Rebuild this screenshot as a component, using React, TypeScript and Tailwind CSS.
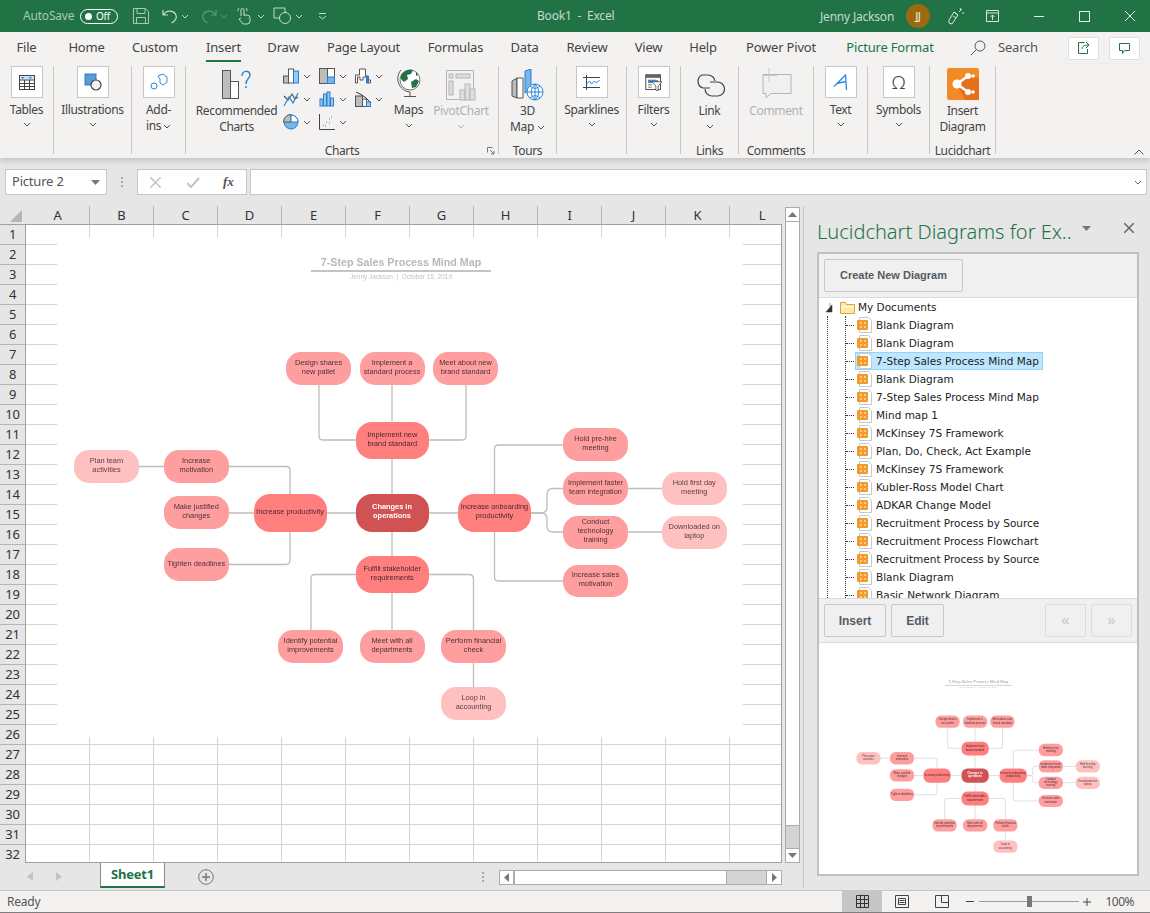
import React from "react";

const Chev = ({ c = "#555", className = "" }: { c?: string; className?: string }) => (
  <svg width="8" height="5" viewBox="0 0 8 5" className={className}><path d="M1 1l3 3 3-3" fill="none" stroke={c} strokeWidth="1" /></svg>
);
const Caret = ({ c = "#777", className = "" }: { c?: string; className?: string }) => (
  <svg width="9" height="5" viewBox="0 0 9 5" className={className}><path d="M0 0h9L4.5 5z" fill={c} /></svg>
);

type N = { x: number; y: number; w: number; h: number; t: string; k: 0 | 1 | 2 | 3 };
const nodes: N[] = [
  { x: 286, y: 352, w: 65, h: 33, t: "Design shares\nnew pallet", k: 2 },
  { x: 359.5, y: 352, w: 65, h: 33, t: "Implement a\nstandard process", k: 2 },
  { x: 433, y: 352, w: 65, h: 33, t: "Meet about new\nbrand standard", k: 2 },
  { x: 355.5, y: 421.5, w: 73.5, h: 37, t: "Implement new\nbrand standard", k: 1 },
  { x: 563, y: 428, w: 65, h: 33, t: "Hold pre-hire\nmeeting", k: 2 },
  { x: 74, y: 450, w: 65, h: 33, t: "Plan team\nactivities", k: 3 },
  { x: 163.5, y: 450, w: 65.5, h: 33, t: "Increase\nmotivation", k: 2 },
  { x: 163.5, y: 496, w: 65.5, h: 33, t: "Make justified\nchanges", k: 2 },
  { x: 253.5, y: 493.5, w: 73, h: 38.5, t: "Increase productivity", k: 1 },
  { x: 355.5, y: 493.5, w: 73, h: 38.5, t: "Changes in\noperations", k: 0 },
  { x: 458, y: 493.5, w: 73, h: 38.5, t: "Increase onboarding\nproductivity", k: 1 },
  { x: 563, y: 472, w: 65, h: 33, t: "Implement faster\nteam integration", k: 2 },
  { x: 661.5, y: 472, w: 65.5, h: 33, t: "Hold first day\nmeeting", k: 3 },
  { x: 563, y: 516, w: 65, h: 32.5, t: "Conduct\ntechnology\ntraining", k: 2 },
  { x: 661.5, y: 516, w: 65.5, h: 32.5, t: "Downloaded on\nlaptop", k: 3 },
  { x: 163.5, y: 548, w: 65.5, h: 33, t: "Tighten deadlines", k: 2 },
  { x: 355.5, y: 556, w: 73.5, h: 37, t: "Fulfill stakeholder\nrequirements", k: 1 },
  { x: 563, y: 564.5, w: 65, h: 32.5, t: "Increase sales\nmotivation", k: 2 },
  { x: 278, y: 630, w: 65, h: 33, t: "Identify potential\nimprovements", k: 2 },
  { x: 359.5, y: 630, w: 65, h: 33, t: "Meet with all\ndepartments", k: 2 },
  { x: 441, y: 630, w: 65, h: 33, t: "Perform financial\ncheck", k: 2 },
  { x: 441, y: 687, w: 65, h: 33, t: "Loop in\naccounting", k: 3 },
];

const kindClass = [
  "bg-[#d15252] text-white font-bold rounded-[16px]",
  "bg-[#ff7f7f] text-[#4a2830] rounded-[16px]",
  "bg-[#ff9e9e] text-[#4d3038] rounded-[15px]",
  "bg-[#ffc0c0] text-[#5a3d45] rounded-[15px]",
];

const links = [
  "M392 385V421M392 458V494M392 532V556M392 593V630",
  "M319 385V436Q319 440 323 440H356",
  "M466 385V436Q466 440 462 440H429",
  "M139 466.5H164M229 513H254M326 513H356M429 513H458",
  "M229 466.5H286Q290 466.5 290 470.5V494",
  "M290 532V560Q290 564.5 286 564.5H229",
  "M494.5 494V449Q494.5 445 498.5 445H563",
  "M494.5 532V577Q494.5 581 498.5 581H563",
  "M531 513H541Q547 513 547 507V494.5Q547 488.5 553 488.5H563",
  "M531 513H541Q547 513 547 519V526Q547 532 553 532H563",
  "M628 488.5H662M628 532H662",
  "M356 574.5H315Q311 574.5 311 578.5V630",
  "M429 574.5H469Q473.5 574.5 473.5 579V630",
  "M473.5 663V687",
];

function Picture() {
  return (
    <div className="relative w-[686px] h-[499px] bg-white blur-[0.3px] font-['Liberation_Sans',sans-serif] tracking-[0px]">
      <svg width="686" height="499" viewBox="57 238 686 499" className="absolute left-0 top-0">
        {links.map((d) => (
          <path key={d} d={d} fill="none" stroke="#bdbdbd" strokeWidth="1.3" />
        ))}
      </svg>
      <div className="absolute left-[254px] top-[18px] w-[180px] flex flex-col items-center">
        <div className="text-[10.7px] leading-[13px] font-bold text-[#b8b8b8] whitespace-nowrap pb-[1px]">7-Step Sales Process Mind Map</div>
        <div className="w-full h-[2px] bg-[#c4c4c4]" />
        <div className="text-[6.5px] leading-[10px] text-[#c4c4c4] whitespace-nowrap">Jenny Jackson &nbsp;|&nbsp; October 15, 2019</div>
      </div>
      {nodes.map((n) => (
        <div
          key={n.t}
          className={"absolute flex items-center justify-center text-center text-[7.4px] leading-[9px] pb-[3px] whitespace-pre " + kindClass[n.k]}
          style={{ left: n.x - 57, top: n.y - 238, width: n.w, height: n.h }}
        >
          {n.t}
        </div>
      ))}
    </div>
  );
}

const BoxIcons: Record<string, React.ReactNode> = {
  Tables: (
    <svg width="18" height="18" viewBox="0 0 18 18">
      <rect x="1.5" y="2.5" width="15" height="14" fill="#fff" stroke="#444" />
      <rect x="2" y="3" width="14" height="3.5" fill="#cfe4f7" />
      <path d="M3 4h3.5l-1.7 2zM10.5 4H14l-1.7 2z" fill="#2b88d8" />
      <path d="M1.5 7h15M1.5 10.5h15M1.5 13.5h15M6.5 7v9.500M11.500 7v9.500" stroke="#444" fill="none" />
    </svg>
  ),
  Illustrations: (
    <svg width="20" height="20" viewBox="0 0 20 20">
      <rect x="2" y="2" width="11" height="11" fill="#5b9bd5" stroke="#2b7cd3" />
      <circle cx="13" cy="13" r="5" fill="#f3f3f3" stroke="#444" strokeWidth="1.2" />
    </svg>
  ),
  Sparklines: (
    <svg width="17" height="15" viewBox="0 0 17 15" fill="none">
      <path d="M0 2.500h17M0 12.500h17M3.500 0v15" stroke="#444" />
      <path d="M3.500 9l3-3 2 3 3-3 2 2 3-3" stroke="#2b7cd3" />
    </svg>
  ),
  Filters: (
    <svg width="17" height="17" viewBox="0 0 22 22" fill="none">
      <rect x="1" y="1" width="19" height="19" stroke="#444" strokeWidth="1.200" />
      <rect x="1" y="1" width="19" height="4" fill="#666" />
      <path d="M4 8h10M4 11h5M4 14h5M4 17h5" stroke="#555" />
      <rect x="4" y="8" width="13" height="3" fill="#2b88d8" />
      <path d="M9 10h13l-5 5.500V22l-3-1v-5.500z" fill="#fff" stroke="#444" />
    </svg>
  ),
  Text: (
    <svg width="15" height="17" viewBox="0 0 15 17" fill="none">
      <path d="M1 12.500L12.500 1 13.500 16M3.500 9.500l9.500-2" stroke="#2b88d8" strokeWidth="1.300" />
    </svg>
  ),
  Symbols: <span className="text-[19px] leading-none text-[#444] font-light">Ω</span>,
};

function Group({ w, label, children }: { w: string; label?: string; children: React.ReactNode }) {
  return (
    <div className={"flex flex-col items-center h-[88px] border-r border-[#c6c6c6] shrink-0 " + w}>
      <div className="flex-1 w-full flex flex-col items-center">{children}</div>
      {label && <div className="text-[12px] leading-[16px] -mb-[5px] text-[#444] whitespace-nowrap">{label}</div>}
    </div>
  );
}

function BoxBtn({ label, icon }: { label: string; icon: string | React.ReactNode }) {
  return (
    <>
      <div className="w-[32px] h-[32px] bg-white border border-[#c6c6c6] flex items-center justify-center">
        {typeof icon === "string" ? BoxIcons[icon] : icon}
      </div>
      <div className="text-[12px] leading-[18px] mt-[3px] text-[#444] whitespace-nowrap">{label}</div>
      <Chev className="mt-[3px]" />
    </>
  );
}

function ChartCell({ children }: { children: React.ReactNode }) {
  return (
    <div className="flex items-center w-[36px] h-[16px]">
      <svg width="16" height="16" viewBox="0 0 16 16" fill="none">{children}</svg>
      <Chev className="ml-[4px]" />
    </div>
  );
}

const Tab = ({ w, t, c = "text-[#444]", active = false }: { w: string; t: string; c?: string; active?: boolean }) => (
  <div className={"h-8 flex items-center justify-center shrink-0 " + w}>
    <span className={"relative whitespace-nowrap " + c}>
      {t}
      {active && <span className="absolute left-0 right-0 -bottom-[4px] h-[2px] bg-[#217346]" />}
    </span>
  </div>
);

const cols = ["A", "B", "C", "D", "E", "F", "G", "H", "I", "J", "K", "L"];
const rows = Array.from({ length: 32 }, (_, i) => i + 1);
const tree = [
  "Blank Diagram", "Blank Diagram", "7-Step Sales Process Mind Map", "Blank Diagram", "7-Step Sales Process Mind Map",
  "Mind map 1", "McKinsey 7S Framework", "Plan, Do, Check, Act Example", "McKinsey 7S Framework", "Kubler-Ross Model Chart",
  "ADKAR Change Model", "Recruitment Process by Source", "Recruitment Process Flowchart", "Recruitment Process by Source",
  "Blank Diagram", "Basic Network Diagram",
];

const FileIcon = () => (
  <span className="relative z-10 block w-[17px] h-[16px] shrink-0">
    <svg width="17" height="16" viewBox="0 0 17 16" className="absolute left-0 top-0">
      <path d="M2.500.5h9l3 3v12h-12z" fill="#fff" stroke="#c8c8c8" />
      <rect x="0" y="3" width="11" height="10" rx="1" fill="#f39a2b" />
      <path d="M3 6h2M7 6h2M3 10h2M7 10h2" stroke="#fff" strokeWidth="1.200" />
    </svg>
  </span>
);

const PanelBtn = ({ w, t, dim = false, small = false }: { w: string; t: string; dim?: boolean; small?: boolean }) => (
  <div className={"h-[33px] border rounded-[2px] bg-[#f0f0f0] flex items-center justify-center font-['Liberation_Sans',sans-serif] tracking-[0px] " + w + (dim ? " border-[#dcdcdc] text-[#cfcfcf] text-[15px] font-bold" : " border-[#c8c8c8] text-[#555b62] font-bold") + (small ? " text-[11px]" : " text-[12px]")}>
    {t}
  </div>
);

export default function App() {
  return (
    <div className="w-[1150px] h-[913px] overflow-hidden flex flex-col bg-[#e6e6e6] text-[13px] text-[#444] font-['Noto_Sans',sans-serif] tracking-[-0.2px]">
      {/* Title bar */}
      <div className="h-8 bg-[#217346] flex items-center shrink-0 text-[12px] relative">
        <span className="ml-[23px] w-[57px] text-[#a9c9b7]">AutoSave</span>
        <div className="w-[38px] h-[15px] rounded-full border border-white flex items-center pl-[4px]">
          <span className="w-[7px] h-[7px] rounded-full bg-white" />
          <span className="ml-[4px] text-[10px] leading-none text-white">Off</span>
        </div>
        <svg width="18" height="18" viewBox="0 0 18 18" fill="none" stroke="#a9c9b7" className="ml-[14px]"><path d="M1.500 1.500h12l3 3v12h-15zM5 1.500v5h8v-5M4.500 16.500v-6h9v6" /></svg>
        <svg width="16" height="16" viewBox="0 0 16 16" fill="none" stroke="#c4dbce" strokeWidth="1.200" className="ml-[12px]"><path d="M1 2v5h5M1.500 7C4 2 11 2 13.500 6c2 3.500 0 7-4 9" /></svg>
        <Chev c="#c4dbce" className="ml-[3px]" />
        <svg width="16" height="16" viewBox="0 0 16 16" fill="none" stroke="#5f9a7b" strokeWidth="1.200" className="ml-[12px]"><path d="M15 2v5h-5M14.500 7C12 2 5 2 2.500 6c-2 3.500 0 7 4 9" /></svg>
        <Chev c="#5f9a7b" className="ml-[3px]" />
        <svg width="15" height="18" viewBox="0 0 15 18" fill="none" stroke="#c4dbce" className="ml-[9px]"><path d="M4 9V3a1.500 1.500 0 013 0v6M7 8h3a3 3 0 013 3v3a3 3 0 01-3 3H6l-4-5 2-1M1 4a3 3 0 011-3M10 4a3 3 0 00-1-3" /></svg>
        <Chev c="#c4dbce" className="ml-[5px]" />
        <svg width="19" height="18" viewBox="0 0 19 18" fill="none" stroke="#c4dbce" className="ml-[8px]"><path d="M6 11H1V1h11v5" /><circle cx="12" cy="11" r="5.500" /></svg>
        <Chev c="#c4dbce" className="ml-[3px]" />
        <svg width="9" height="7" viewBox="0 0 9 7" fill="none" stroke="#c4dbce" className="ml-[15px]"><path d="M1 .5h7M1 3l3.500 3L8 3" /></svg>
        <span className="absolute left-[537px] top-[7px] text-[#c4dbce] text-[12px]">Book1&nbsp; -&nbsp; Excel</span>
        <span className="absolute left-[820px] top-[8px] text-[#c4dbce] text-[12px]">Jenny Jackson</span>
        <div className="ml-auto flex items-center">
          <span className="w-[24px] h-[24px] rounded-full bg-[#9a6a0c] text-white text-[10px] flex items-center justify-center">JJ</span>
          <svg width="16" height="18" viewBox="0 0 16 18" fill="none" stroke="#d6e6dc" className="ml-[18px]"><path d="M1 16l3 1 6-9-4-3-5 8zM6 5l4 3M11 5l3-3M12 1l1 2M14 6h2M5 9l3 2" /></svg>
          <svg width="13" height="12" viewBox="0 0 13 12" fill="none" stroke="#d6e6dc" className="ml-[22px]"><path d="M.5 .5h12v11H.5zM.5 3h12M6.500 10V5M4.500 7l2-2 2 2" /></svg>
          <span className="w-[10px] h-[1px] bg-[#e6efe9] ml-[35px]" />
          <span className="w-[11px] h-[11px] border border-[#e6efe9] ml-[35px]" />
          <svg width="10" height="10" viewBox="0 0 10 10" stroke="#e6efe9" className="ml-[35px] mr-[15px]"><path d="M0 0l10 10M10 0L0 10" /></svg>
        </div>
      </div>

      {/* Tabs */}
      <div className="h-8 bg-[#f3f2f1] flex items-center shrink-0">
        <Tab w="w-[53px]" t="File" />
        <Tab w="w-[67px]" t="Home" />
        <Tab w="w-[70px]" t="Custom" />
        <Tab w="w-[67px]" t="Insert" active />
        <Tab w="w-[52px]" t="Draw" />
        <Tab w="w-[109px]" t="Page Layout" />
        <Tab w="w-[75px]" t="Formulas" />
        <Tab w="w-[63px]" t="Data" />
        <Tab w="w-[62px]" t="Review" />
        <Tab w="w-[61px]" t="View" />
        <Tab w="w-[48px]" t="Help" />
        <Tab w="w-[108px]" t="Power Pivot" />
        <Tab w="w-[110px]" t="Picture Format" c="text-[#217346]" />
        <svg width="16" height="16" viewBox="0 0 16 16" fill="none" stroke="#555" className="ml-[25px]"><circle cx="10" cy="6" r="5" /><path d="M6.500 9.500L1 15" /></svg>
        <span className="ml-[12px] text-[#555]">Search</span>
        <div className="ml-auto flex gap-[10px] mr-[10px]">
          <div className="w-[31px] h-[23px] bg-white border border-[#e1dfdd] rounded-[2px] flex items-center justify-center">
            <svg width="14" height="14" viewBox="0 0 14 14" fill="none" stroke="#217346"><path d="M7.500 1.500h-6v11h9V8M5 8c0-3 3-4 6-4M9 1l3 3-3 3" /></svg>
          </div>
          <div className="w-[31px] h-[23px] bg-white border border-[#e1dfdd] rounded-[2px] flex items-center justify-center">
            <svg width="13" height="13" viewBox="0 0 13 13" fill="none" stroke="#217346"><path d="M1.500 1.500h10v7h-5l-2 3v-3h-3z" /></svg>
          </div>
        </div>
      </div>

      {/* Ribbon */}
      <div className="h-[94px] bg-[#f3f2f1] flex pt-[2px] shrink-0 relative z-10 shadow-[0_3px_5px_rgba(0,0,0,0.14)] text-[12px] tracking-[-0.35px]">
        <Group w="w-[54px]"><BoxBtn label="Tables" icon="Tables" /></Group>
        <Group w="w-[78px]"><BoxBtn label="Illustrations" icon="Illustrations" /></Group>
        <Group w="w-[54px]">
          <div className="w-[32px] h-[32px] bg-white border border-[#c6c6c6] flex items-center justify-center">
            <svg width="18" height="18" viewBox="0 0 18 18" fill="none" stroke="#2b88d8"><path d="M8 3l5-2 4 3v5l-4 3-3-2V6z" /><circle cx="4" cy="13" r="3" /></svg>
          </div>
          <div className="text-[12px] leading-[16px] mt-[4px] text-center text-[#444]">Add-<br /><span className="inline-flex items-center gap-[2px]">ins<Chev /></span></div>
        </Group>

        {/* Charts */}
        <Group w="w-[313px]" label="Charts">
          <div className="flex w-full relative">
            <div className="w-[96px] shrink-0 flex flex-col items-center pl-[5px]">
              <svg width="30" height="30" viewBox="0 0 30 30" fill="none" className="mt-[4px] ml-[1px] mb-[3px]">
                <rect x=".5" y=".5" width="8" height="28" fill="#bdbdbd" stroke="#555" />
                <rect x="8.500" y="11.500" width="8" height="17" fill="#fff" stroke="#555" />
                <path d="M20 6c0-6 8-6 8-1 0 4-4 3-4 9M24 16v2" stroke="#2b88d8" strokeWidth="1.500" />
              </svg>
              <div className="text-center leading-[16px] text-[#444] whitespace-nowrap">Recommended<br />Charts</div>
            </div>
            <div className="grid grid-cols-[36px_36px_36px] auto-rows-[16px] gap-y-[7px] pt-[2px] h-[68px] shrink-0 ml-[1px]">
              <ChartCell><rect x=".5" y="8" width="5" height="7" fill="#bdbdbd" stroke="#555" /><rect x="5.500" y="1" width="5" height="14" fill="#fff" stroke="#555" /><rect x="10.500" y="3" width="5" height="12" fill="#9cc8ee" stroke="#2b7cd3" /></ChartCell>
              <ChartCell><rect x=".5" y=".5" width="15" height="15" fill="#fff" stroke="#555" /><rect x=".5" y=".5" width="8" height="15" fill="#bdbdbd" stroke="#555" /><rect x="8.500" y="9" width="7" height="6.500" fill="#7ab5e8" stroke="#2b7cd3" /></ChartCell>
              <ChartCell><path d="M.5 15V7h4V1h6v7h3v4h2v3h-4V9H8v3H5V9H2.500v6z" fill="#fff" stroke="#555" /><rect x="11" y="8" width="3" height="7" fill="#2b7cd3" /></ChartCell>
              <ChartCell><path d="M1 5l4 4 4-6 3 5 3-2" stroke="#555" strokeWidth="1.200" /><path d="M1 15L6 6l4 6 5-10" stroke="#2b88d8" strokeWidth="1.200" /></ChartCell>
              <ChartCell><rect x="1" y="8" width="3" height="7" fill="#9cc8ee" stroke="#2b7cd3" /><rect x="4.500" y="3" width="3" height="12" fill="#9cc8ee" stroke="#2b7cd3" /><rect x="8" y="1" width="3" height="14" fill="#9cc8ee" stroke="#2b7cd3" /><rect x="11.500" y="7" width="3" height="8" fill="#9cc8ee" stroke="#2b7cd3" /></ChartCell>
              <ChartCell><rect x=".5" y="5" width="7" height="10.500" fill="#bdbdbd" stroke="#555" /><rect x="7.500" y="8" width="4" height="7.500" fill="#fff" stroke="#555" /><rect x="11.500" y="11" width="4" height="4.500" fill="#9cc8ee" stroke="#2b7cd3" /><path d="M1 1l6 3 4 3 4 4" stroke="#333" /></ChartCell>
              <ChartCell><circle cx="8" cy="8" r="7" fill="#7ab5e8" stroke="#2b7cd3" /><path d="M8 8V0.500A7.500 7.500 0 00.5 8z" fill="#bdbdbd" stroke="#555" /><path d="M8 8h7A7 7 0 008 1z" fill="#fff" stroke="#2b7cd3" /></ChartCell>
              <ChartCell><path d="M.5 0v15.500H16" stroke="#444" /><path d="M4 11h1M7 8h1M10 5h1M6 12h1M10 9h1M12 3h1" stroke="#2b88d8" /></ChartCell>
            </div>
            <div className="w-[33px] shrink-0 flex flex-col items-center ml-[1px]">
              <svg width="26" height="32" viewBox="0 0 26 32" fill="none" className="mt-[1px] mb-[3px]">
                <circle cx="14" cy="13" r="10" fill="#fff" stroke="#777" />
                <path d="M5 8c3-5 9-6 12-5l-2 4-4 1 1 4-4 3-3-3zM15 15l5-3 3 2-3 6-4 1zM20 5l2 3-2 1z" fill="#217346" />
                <path d="M5 3C-2 11 3 24 14 25M14 25v4M8 29.500h12" stroke="#555" />
              </svg>
              <div className="leading-[16px] text-[#444]">Maps</div>
              <Chev className="mt-[5px]" />
            </div>
            <div className="w-[56px] shrink-0 flex flex-col items-center ml-[8px]">
              <svg width="30" height="31" viewBox="0 0 30 31" fill="none" stroke="#b5b5b5" className="mt-[4px] mb-[2px]">
                <path d="M.5 .5h27v20h-6M.5 .5v29h13" />
                <rect x="3" y="4" width="4" height="4" fill="#ddd" />
                <rect x="10" y="4" width="14" height="4" fill="#ddd" />
                <rect x="3" y="11" width="4" height="14" fill="#ddd" />
                <rect x="14" y="20" width="5" height="10" fill="#ddd" />
                <rect x="19" y="14" width="5" height="16" fill="#ddd" />
                <rect x="24" y="19" width="5" height="11" fill="#ddd" />
              </svg>
              <div className="leading-[16px] text-[#b1b1b1]">PivotChart</div>
              <Chev c="#b1b1b1" className="mt-[5px]" />
            </div>
            <svg width="8" height="8" viewBox="0 0 8 8" fill="none" stroke="#777" className="absolute left-[301px] top-[81px]"><path d="M.5 .5h5M.5 .5v5M3 3l4 4M7 4v3H4" /></svg>
          </div>
        </Group>

        <Group w="w-[58px]" label="Tours">
          <svg width="34" height="32" viewBox="0 0 34 32" fill="none" className="mt-[3px] mb-[2px]">
            <path d="M1 12l5-3v20l-5-2z" fill="#bdbdbd" stroke="#555" />
            <path d="M6 9h6v20H6z" fill="#fff" stroke="#555" />
            <path d="M14 2l6-2v20l-6 4z" fill="#7ab5e8" stroke="#2b7cd3" />
            <circle cx="24" cy="23" r="8" fill="#fff" stroke="#2b88d8" />
            <path d="M16 23h16M24 15v16M19 17c3 3 7 3 10 0M19 29c3-3 7-3 10 0M24 15c-5 5-5 11 0 16M24 15c5 5 5 11 0 16" stroke="#2b88d8" />
          </svg>
          <div className="leading-[16px] text-center text-[#444]">3D<br /><span className="inline-flex items-center gap-[3px]">Map<Chev /></span></div>
        </Group>
        <Group w="w-[70px]"><BoxBtn label="Sparklines" icon="Sparklines" /></Group>
        <Group w="w-[54px]"><BoxBtn label="Filters" icon="Filters" /></Group>
        <Group w="w-[58px]" label="Links">
          <svg width="30" height="26" viewBox="0 0 30 26" fill="none" stroke="#444" strokeWidth="1.200" className="mt-[7px] mb-[4px]">
            <path d="M15 15H8a7 7 0 01-1-13h6a7 7 0 017 6" />
            <path d="M15 9h7a7 7 0 011 14h-6a7 7 0 01-7-7" />
          </svg>
          <div className="leading-[16px] text-[#444]">Link</div>
          <Chev className="mt-[5px]" />
        </Group>
        <Group w="w-[75px]" label="Comments">
          <svg width="32" height="30" viewBox="0 0 32 30" fill="none" stroke="#b5b5b5" className="mt-[2px] mb-[5px]">
            <path d="M3 6.500h28v19H11l-5 4v-4H3z" fill="#f0f0f0" />
            <path d="M9 0v14M2 7.500h15" stroke="#c9c9c9" />
          </svg>
          <div className="leading-[16px] text-[#b1b1b1]">Comment</div>
        </Group>
        <Group w="w-[54px]"><BoxBtn label="Text" icon="Text" /></Group>
        <Group w="w-[62px]"><BoxBtn label="Symbols" icon="Symbols" /></Group>
        <Group w="w-[66px]" label="Lucidchart">
          <svg width="32" height="32" viewBox="0 0 32 32" className="mt-[2px] mb-[3px]">
            <rect width="32" height="32" rx="2" fill="#f28a26" />
            <path d="M10 16l12-11 10 6v21H18z" fill="#e6701a" />
            <path d="M10 16l11-8M10 16l11 8" stroke="#fff" strokeWidth="2.500" />
            <circle cx="10" cy="16" r="4.500" fill="#fff" />
            <circle cx="21" cy="8" r="3" fill="#fff" />
            <circle cx="21" cy="24" r="3" fill="#fff" />
            <circle cx="26" cy="8" r="1.800" fill="#fff" />
            <circle cx="26" cy="24" r="1.800" fill="#fff" />
          </svg>
          <div className="leading-[16px] text-center text-[#444]">Insert<br />Diagram</div>
        </Group>
        <svg width="10" height="6" viewBox="0 0 10 6" fill="none" stroke="#555" className="absolute left-[1134px] top-[85px]"><path d="M.5 5.500L5 1l4.500 4.500" /></svg>
      </div>

      {/* Formula bar */}
      <div className="h-[48px] pt-[11px] flex shrink-0 pl-[5px]">
        <div className="w-[102px] h-[26px] bg-white border border-[#c6c6c6] flex items-center pl-[6px] text-[13px] text-[#555]">
          Picture 2
          <Caret className="ml-auto mr-[6px]" />
        </div>
        <div className="w-[30px] h-[26px] flex items-center justify-center">
          <svg width="3" height="11" viewBox="0 0 3 11" fill="#aaa"><rect x="0" y="0" width="2" height="2" /><rect x="0" y="4" width="2" height="2" /><rect x="0" y="8" width="2" height="2" /></svg>
        </div>
        <div className="w-[110px] h-[26px] bg-white border border-[#c6c6c6] flex items-center pl-[12px]">
          <svg width="11" height="11" viewBox="0 0 11 11" stroke="#c3c3c3" strokeWidth="1.500"><path d="M0 0l11 11M11 0L0 11" /></svg>
          <svg width="13" height="11" viewBox="0 0 13 11" fill="none" stroke="#c3c3c3" strokeWidth="2" className="ml-[26px]"><path d="M0 6l4 4 8-9" /></svg>
          <span className="ml-[23px] font-['Liberation_Serif',serif] italic font-bold text-[13px] text-[#555]">fx</span>
        </div>
        <div className="w-[897px] h-[26px] ml-[3px] bg-white border border-[#c6c6c6] flex items-center justify-end pr-[4px]">
          <Chev c="#666" />
        </div>
      </div>

      {/* Main */}
      <div className="flex h-[684px] shrink-0">
        <div className="w-[804px] shrink-0 flex flex-col border-r border-[#c6c6c6] mb-[2px]">
          <div className="flex h-[657px]">
            <div className="w-[782px] shrink-0 flex flex-col">
              {/* Column header */}
              <div className="flex h-[19px] shrink-0 border-b border-[#9f9f9f]">
                <div className="w-[26px] border-r border-transparent flex items-end justify-end pr-[3px] pb-[2px] shrink-0">
                  <svg width="12" height="12" viewBox="0 0 12 12"><path d="M12 0v12H0z" fill="#b5b5b5" /></svg>
                </div>
                <div className="grid grid-cols-[repeat(11,64px)_52px]">
                  {cols.map((c, i) => (
                    <div key={c} className={"flex items-center justify-center text-[13px] text-[#333] " + (i < 11 ? "border-r border-[#b5b5b5]" : "pl-[12px]")}>{c}</div>
                  ))}
                </div>
              </div>
              {/* Grid */}
              <div className="flex flex-1 min-h-0 overflow-hidden">
                <div className="w-[26px] shrink-0 border-r border-[#9f9f9f] flex flex-col">
                  {rows.map((r) => (
                    <div key={r} className="h-[20px] shrink-0 border-b border-[#b5b5b5] flex items-center justify-center pt-[1px] text-[13px] text-[#333]">{r}</div>
                  ))}
                </div>
                <div className="relative flex-1 bg-white border-r border-b border-[#9f9f9f] overflow-hidden">
                  <div className="flex flex-col">
                    {rows.map((r) => (
                      <div key={r} className="flex h-[20px] shrink-0 border-b border-[#d4d4d4]">
                        {cols.map((c, i) => (
                          <div key={c} className={i < 11 ? "w-[64px] shrink-0 border-r border-[#d4d4d4]" : "w-[52px] shrink-0"} />
                        ))}
                      </div>
                    ))}
                  </div>
                  <div className="absolute left-[31px] top-[13px]"><Picture /></div>
                </div>
              </div>
            </div>
            {/* V scroll */}
            <div className="w-[15px] ml-[3px] mt-[1px] flex flex-col bg-[#d4d4d4] border-x border-[#ababab] shrink-0">
              <div className="h-[15px] bg-white border-t border-b border-[#ababab] flex items-center justify-center shrink-0"><svg width="9" height="5" viewBox="0 0 9 5"><path d="M0 5h9L4.500 0z" fill="#777" /></svg></div>
              <div className="h-[604px] bg-white border-b border-[#ababab] shrink-0" />
              <div className="mt-auto h-[15px] bg-white border-t border-b border-[#ababab] flex items-center justify-center shrink-0"><Caret /></div>
            </div>
          </div>
          {/* Sheet tabs */}
          <div className="flex-1 flex items-start">
            <svg width="6" height="9" viewBox="0 0 6 9" className="ml-[27px] mt-[9px]"><path d="M6 0v9L0 4.500z" fill="#c3c3c3" /></svg>
            <svg width="6" height="9" viewBox="0 0 6 9" className="ml-[23px] mt-[9px]"><path d="M0 0v9l6-4.500z" fill="#c3c3c3" /></svg>
            <div className="ml-[38px] w-[65px] h-[25px] bg-white border-x border-b-2 border-[#8a8a8a] border-b-[#217346] flex items-center justify-center font-bold text-[#217346] text-[13px]">Sheet1</div>
            <svg width="16" height="16" viewBox="0 0 16 16" fill="none" stroke="#777" className="ml-[33px] mt-[6px]"><circle cx="8" cy="8" r="7.300" /><path d="M8 4v8M4 8h8" strokeWidth="1.500" /></svg>
            <svg width="3" height="11" viewBox="0 0 3 11" fill="#aaa" className="ml-[268px] mt-[9px]"><rect width="2" height="2" /><rect y="4" width="2" height="2" /><rect y="8" width="2" height="2" /></svg>
            <div className="ml-[14px] mt-[7px] w-[283px] h-[15px] flex border border-[#ababab] bg-[#d4d4d4]">
              <div className="w-[15px] bg-white border-r-2 border-[#ababab] flex items-center justify-center"><svg width="5" height="9" viewBox="0 0 5 9"><path d="M5 0v9L0 4.500z" fill="#777" /></svg></div>
              <div className="w-[212px] bg-white border-r border-[#ababab]" />
              <div className="ml-auto w-[15px] bg-white border-l border-[#ababab] flex items-center justify-center"><svg width="5" height="9" viewBox="0 0 5 9"><path d="M0 0v9l5-4.500z" fill="#777" /></svg></div>
            </div>
          </div>
        </div>

        {/* Side panel */}
        <div className="flex-1 min-w-0 flex flex-col pl-[13px] pr-[11px]">
          <div className="h-[46px] flex items-start relative shrink-0">
            <span className="mt-[11px] text-[20px] leading-[30px] font-light text-[#217346] whitespace-nowrap tracking-[0px]">Lucidchart Diagrams for Ex..</span>
            <Caret c="#777" className="absolute left-[265px] top-[20px]" />
            <svg width="10" height="10" viewBox="0 0 10 10" stroke="#666" strokeWidth="1.500" className="absolute left-[307px] top-[17px]"><path d="M0 0l10 10M10 0L0 10" /></svg>
          </div>
          <div className="h-[624px] border-2 border-[#c0c0c0] bg-white flex flex-col shrink-0">
            <div className="h-[44px] bg-[#f0f0f0] border-b border-[#dcdcdc] pl-[5px] pt-[5px] shrink-0">
              <PanelBtn w="w-[139px]" t="Create New Diagram" small />
            </div>
            <div className="h-[300px] overflow-hidden relative shrink-0 font-['DejaVu_Sans',sans-serif] text-[10.5px] text-[#222] tracking-[0px]">
              <div className="h-[18px] flex items-center relative pt-[1px]">
                <svg width="12" height="10" viewBox="0 0 12 10" className="ml-[5px] shrink-0"><path d="M6 0v4M8 2v7H2z" fill="#333" stroke="#333" strokeWidth=".5" /></svg>
                <svg width="15" height="13" viewBox="0 0 15 13" className="ml-[4px] shrink-0"><path d="M.5 12.500v-11h5l1 2h8v9z" fill="#fde9a8" stroke="#e0a23c" /><path d="M1 6h13" stroke="#fff" /></svg>
                <span className="ml-[3px]">My Documents</span>
              </div>
              <div className="ml-[8px] border-l border-dotted border-[#333]">
                <div className="ml-[17px] border-l border-dotted border-[#333]">
                  {tree.map((t, i) => (
                    <div key={i} className="h-[18px] flex items-center">
                      <span className="w-[8px] border-t border-dotted border-[#333] shrink-0" />
                      <span className="ml-[3px] shrink-0 relative z-10"><FileIcon /></span>
                      <span className={i === 2 ? "ml-[-19px] pl-[20px] pr-[3px] h-[18px] leading-[17px] bg-[#bfe6ff] border border-[#91d5f8] relative whitespace-nowrap" : "ml-[2px] whitespace-nowrap pt-[1px]"}>{t}</span>
                    </div>
                  ))}
                </div>
              </div>
            </div>
            <div className="h-[45px] bg-[#f0f0f0] border-y border-[#dcdcdc] flex pl-[5px] pr-[5px] pt-[5px] gap-[5px] shrink-0">
              <PanelBtn w="w-[62px]" t="Insert" />
              <PanelBtn w="w-[53px]" t="Edit" />
              <div className="ml-auto flex gap-[5px]">
                <PanelBtn w="w-[41px]" t="«" dim />
                <PanelBtn w="w-[41px]" t="»" dim />
              </div>
            </div>
            <div className="relative flex-1 overflow-hidden bg-white">
              <div className="absolute left-[31px] top-[30px] origin-top-left scale-[0.373]"><Picture /></div>
            </div>
          </div>
        </div>
      </div>

      {/* Status bar */}
      <div className="flex-1 bg-[#f3f2f1] border-t border-[#c6c6c6] border-b border-b-[#7f7f7f] flex items-center text-[12px] text-[#555]">
        <span className="ml-[7px]">Ready</span>
        <div className="ml-auto flex items-center">
          <div className="w-[40px] h-[21px] bg-[#c6c6c6] flex items-center justify-center">
            <svg width="13" height="13" viewBox="0 0 13 13" fill="none" stroke="#333"><path d="M.5 .5h12v12H.5zM.5 4.500h12M.5 8.500h12M4.500 .5v12M8.500 .5v12" /></svg>
          </div>
          <svg width="14" height="13" viewBox="0 0 14 13" fill="none" stroke="#444" className="ml-[13px]"><path d="M.5 .5h13v12H.5zM3.500 3.500h7v6h-7zM4.500 5.500h5M4.500 7.500h5" /></svg>
          <svg width="14" height="13" viewBox="0 0 14 13" fill="none" stroke="#444" className="ml-[26px]"><path d="M.5 .5h13v12H.5zM6.500 .5v7h7" /></svg>
          <span className="w-[8px] h-[1px] bg-[#444] ml-[17px]" />
          <div className="w-[100px] h-[1px] bg-[#9a9a9a] ml-[5px] relative">
            <span className="absolute left-[48px] -top-[5px] w-[5px] h-[11px] bg-[#777]" />
          </div>
          <svg width="8" height="8" viewBox="0 0 8 8" stroke="#444" className="ml-[4px]"><path d="M4 0v8M0 4h8" /></svg>
          <span className="ml-[14px] mr-[16px] text-[12px] tracking-[-0.5px]">100%</span>
        </div>
      </div>
    </div>
  );
}
